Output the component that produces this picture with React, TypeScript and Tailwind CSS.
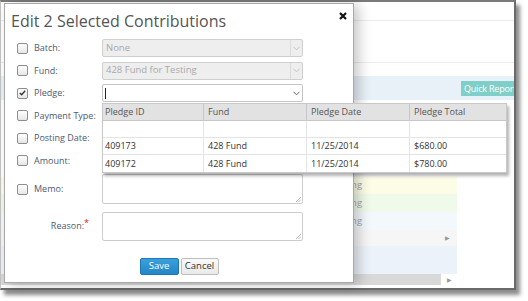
import React from 'react';

const Checkbox = ({ checked = false }: { checked?: boolean }) => (
  <span className="w-[11px] h-[11px] shrink-0 border border-[#8e8e8e] rounded-[2px] bg-gradient-to-b from-white to-[#e6e6e6] flex items-center justify-center">
    {checked && (
      <svg width="7" height="6" viewBox="0 0 7 6">
        <polyline points="0.8,3 2.6,4.8 6.2,0.8" fill="none" stroke="#333" strokeWidth="1.3" />
      </svg>
    )}
  </span>
);

const Chevron = ({ color }: { color: string }) => (
  <svg width="7" height="5" viewBox="0 0 7 5">
    <polyline points="0.5,0.8 3.5,3.8 6.5,0.8" fill="none" stroke={color} strokeWidth="1" />
  </svg>
);

const Select = ({ value, disabled = false }: { value: string; disabled?: boolean }) => (
  <div
    className={`w-[201px] h-[18px] border rounded-[2px] flex ${
      disabled ? 'bg-[#eeeeee] border-[#cfcfcf]' : 'bg-white border-[#c4c4c4]'
    }`}
  >
    <div className={`flex-1 px-[3px] flex items-center text-[9.5px] ${disabled ? 'text-[#a9a9a9]' : 'text-[#222]'}`}>
      {value}
    </div>
    <div className={`w-[12px] flex items-center justify-center border-l ${disabled ? 'border-[#dcdcdc]' : 'border-white'}`}>
      <Chevron color={disabled ? '#c2c2c2' : '#666'} />
    </div>
  </div>
);

const TextArea = ({ h }: { h: string }) => (
  <div className={`w-[201px] ${h} border border-[#cdcdcd] rounded-[2px] bg-white flex items-end justify-end p-[1px]`}>
    <svg width="6" height="6" viewBox="0 0 6 6">
      <line x1="1" y1="6" x2="6" y2="1" stroke="#aaa" strokeWidth="0.8" />
      <line x1="3.5" y1="6" x2="6" y2="3.5" stroke="#aaa" strokeWidth="0.8" />
    </svg>
  </div>
);

const FieldRow = ({ label, checked, children }: { label: string; checked?: boolean; children: React.ReactNode }) => (
  <div className="flex items-center">
    <div className="w-[85px] flex items-center gap-[6px]">
      <Checkbox checked={checked} />
      <span className="text-[9px] text-[#4a5a74] whitespace-nowrap">{label}</span>
    </div>
    {children}
  </div>
);

const pledges = [
  { id: '409173', fund: '428 Fund', date: '11/25/2014', total: '$680.00' },
  { id: '409172', fund: '428 Fund', date: '11/25/2014', total: '$780.00' },
];

const PledgeDropdown = () => (
  <div className="absolute left-0 top-[19px] w-[405px] bg-white border border-[#c8c8c8] shadow-[2px_3px_3px_rgba(0,0,0,0.3)] text-[9px] text-[#333] z-20">
    <div className="grid grid-cols-[101px_103px_103px_1fr] h-[17px] bg-[#e2e2e2] border-b border-[#c6c6c6] text-[#555]">
      <div className="pl-[2px] flex items-center border-r border-[#c6c6c6]">Pledge ID</div>
      <div className="pl-[4px] flex items-center border-r border-[#c6c6c6]">Fund</div>
      <div className="pl-[4px] flex items-center border-r border-[#c6c6c6]">Pledge Date</div>
      <div className="pl-[4px] flex items-center">Pledge Total</div>
    </div>
    <div className="grid grid-cols-[101px_103px_103px_1fr] h-[17px] border-b border-[#e4e4e4]">
      <div className="border-r border-[#e4e4e4]" />
      <div className="border-r border-[#e4e4e4]" />
      <div className="border-r border-[#e4e4e4]" />
      <div />
    </div>
    {pledges.map((p, i) => (
      <div
        key={p.id}
        className={`grid grid-cols-[101px_103px_103px_1fr] h-[17px] ${i === 0 ? 'border-b border-[#e4e4e4]' : ''}`}
      >
        <div className="pl-[2px] flex items-center border-r border-[#e4e4e4]">{p.id}</div>
        <div className="pl-[4px] flex items-center border-r border-[#e4e4e4]">{p.fund}</div>
        <div className="pl-[4px] flex items-center border-r border-[#e4e4e4]">{p.date}</div>
        <div className="pl-[4px] flex items-center">{p.total}</div>
      </div>
    ))}
  </div>
);

const Arrow = () => <span className="text-[6px] text-[#999] leading-none">▶</span>;

export default function App() {
  return (
    <div className="w-[528px] h-[301px] bg-white overflow-hidden font-['Open_Sans','Noto_Sans',sans-serif]">
      <div className="relative w-[516px] h-[290px] border-t-2 border-r-2 border-b-2 border-l border-t-[#7a7a7a] border-r-[#6a6a6a] border-b-[#6a6a6a] border-l-[#c4c4c4] shadow-[4px_5px_4px_rgba(0,0,0,0.45)] bg-white">
        {/* page behind the dialog */}
        <div className="flex flex-col h-full">
          <div className="h-[19px] border-b border-[#e6edf4]" />
          <div className="h-[42px] border-b border-[#e6edf4]" />
          <div className="h-[13px]" />
          <div className="h-[24px] bg-[#e8f0f8] flex justify-end pt-[5px]">
            <div className="w-[53px] h-[15px] bg-[#7fcfc8] text-white text-[9px] pl-[3px] flex items-center whitespace-nowrap overflow-hidden tracking-[-0.2px]">
              Quick Report
            </div>
          </div>
          <div className="flex-1 flex">
            <div className="w-[456px] flex flex-col text-[9.5px] text-[#a4a4a4]">
              <div className="h-[77px]" />
              <div className="h-[17px] bg-[#fdfde7] pl-[325px] flex items-center">Pending</div>
              <div className="h-[18px] bg-[#f0faea] pl-[325px] flex items-center">Pending</div>
              <div className="h-[18px] bg-[#f3f8fd] pl-[325px] flex items-center">Pending</div>
              <div className="h-[16px] bg-[#f6f6f6] flex items-center justify-end pr-[7px]">
                <Arrow />
              </div>
              <div className="h-[28px] bg-[#ecf2f9]" />
              <div className="h-[11px] flex items-center">
                <div className="w-[440px] h-full bg-[#d9d9d9]" />
                <div className="flex-1 flex justify-center">
                  <Arrow />
                </div>
              </div>
            </div>
            <div className="flex-1" />
          </div>
        </div>

        {/* dialog */}
        <div className="absolute left-[3px] top-[1px] w-[350px] h-[280px] bg-white border border-[#a8a8a8] shadow-[5px_2px_12px_rgba(0,0,0,0.22)] z-10">
          <div className="flex justify-between items-start pl-[6px] pr-[6px] pt-[6px]">
            <h1 className="text-[16px] leading-[22px] text-[#555]">Edit 2 Selected Contributions</h1>
            <svg width="8" height="8" viewBox="0 0 8 8" className="mt-[2px]">
              <path d="M1 1 L7 7 M7 1 L1 7" stroke="#111" strokeWidth="2.2" />
            </svg>
          </div>
          <div className="flex flex-col gap-[4.5px] pl-[12px] mt-[7px]">
            <FieldRow label="Batch:">
              <Select value="None" disabled />
            </FieldRow>
            <FieldRow label="Fund:">
              <Select value="428 Fund for Testing" disabled />
            </FieldRow>
            <FieldRow label="Pledge:" checked>
              <div className="relative">
                <div className="w-[201px] h-[18px] border border-[#c4c4c4] rounded-[2px] bg-white flex">
                  <div className="flex-1 flex items-center pl-[2px]">
                    <span className="w-[1px] h-[11px] bg-[#222]" />
                  </div>
                  <div className="w-[12px] flex items-center justify-center">
                    <Chevron color="#666" />
                  </div>
                </div>
                <PledgeDropdown />
              </div>
            </FieldRow>
            <FieldRow label="Payment Type:">
              <Select value="" />
            </FieldRow>
            <FieldRow label="Posting Date:">
              <Select value="" />
            </FieldRow>
            <FieldRow label="Amount:">
              <div className="w-[201px] h-[18px] border border-[#c4c4c4] rounded-[2px] bg-white" />
            </FieldRow>
            <FieldRow label="Memo:">
              <TextArea h="h-[30px]" />
            </FieldRow>
            <div className="flex items-center mt-[3px]">
              <div className="w-[85px] flex justify-end pr-[13px]">
                <span className="text-[9px] text-[#4a5a74]">Reason:</span>
                <span className="text-[9px] text-[#e02020] leading-none -mt-[1px]">*</span>
              </div>
              <TextArea h="h-[29px]" />
            </div>
          </div>
          <div className="flex justify-center gap-[2px] mt-[17px]">
            <button className="w-[39px] h-[17px] rounded-[2px] border border-[#1f78b4] bg-gradient-to-b from-[#3aa0dc] to-[#2386c6] text-white text-[9.5px] leading-none">
              Save
            </button>
            <button className="w-[38px] h-[17px] rounded-[2px] border border-[#bdbdbd] bg-gradient-to-b from-[#fafafa] to-[#e9e9e9] text-[#333] text-[9.5px] leading-none">
              Cancel
            </button>
          </div>
        </div>
      </div>
    </div>
  );
}
